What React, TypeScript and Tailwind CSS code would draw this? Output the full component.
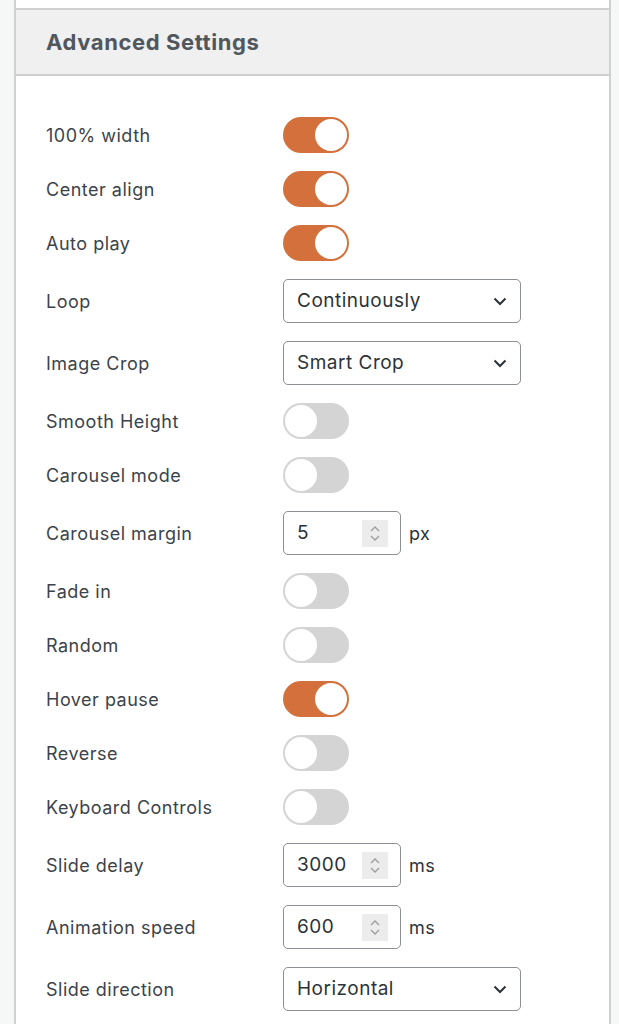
import React from "react";

type Row =
  | { label: string; kind: "toggle"; on: boolean }
  | { label: string; kind: "select"; value: string }
  | { label: string; kind: "number"; value: string; unit: string };

const rows: Row[] = [
  { label: "100% width", kind: "toggle", on: true },
  { label: "Center align", kind: "toggle", on: true },
  { label: "Auto play", kind: "toggle", on: true },
  { label: "Loop", kind: "select", value: "Continuously" },
  { label: "Image Crop", kind: "select", value: "Smart Crop" },
  { label: "Smooth Height", kind: "toggle", on: false },
  { label: "Carousel mode", kind: "toggle", on: false },
  { label: "Carousel margin", kind: "number", value: "5", unit: "px" },
  { label: "Fade in", kind: "toggle", on: false },
  { label: "Random", kind: "toggle", on: false },
  { label: "Hover pause", kind: "toggle", on: true },
  { label: "Reverse", kind: "toggle", on: false },
  { label: "Keyboard Controls", kind: "toggle", on: false },
  { label: "Slide delay", kind: "number", value: "3000", unit: "ms" },
  { label: "Animation speed", kind: "number", value: "600", unit: "ms" },
  { label: "Slide direction", kind: "select", value: "Horizontal" },
];

const Toggle = ({ on }: { on: boolean }) => (
  <div
    className={`flex h-[36px] w-[66px] items-center rounded-full px-[2px] ${
      on ? "justify-end bg-[#d3703b]" : "justify-start bg-[#d4d4d4]"
    }`}
  >
    <div className="h-[32px] w-[32px] rounded-full bg-white" />
  </div>
);

const Chevron = () => (
  <svg width="14" height="9" viewBox="0 0 14 9" fill="none">
    <path d="M1.5 1.5L7 7l5.5-5.5" stroke="#2c3338" strokeWidth="2" />
  </svg>
);

const Select = ({ value }: { value: string }) => (
  <div className="flex h-[44px] w-[238px] items-center justify-between rounded-[5px] border border-[#8c8f94] bg-white pl-[13px] pr-[13px]">
    <span className="text-[19px] tracking-[0.5px] text-[#2c3338]">{value}</span>
    <Chevron />
  </div>
);

const NumberInput = ({ value, unit }: { value: string; unit: string }) => (
  <div className="flex items-center gap-[8px]">
    <div className="flex h-[44px] w-[118px] items-center justify-between rounded-[5px] border border-[#8c8f94] bg-white pl-[13px] pr-[12px]">
      <span className="text-[19px] tracking-[0.5px] text-[#2c3338]">{value}</span>
      <div className="flex h-[27px] w-[26px] flex-col items-center justify-center gap-[3px] bg-[#ececec]">
        <svg width="10" height="6" viewBox="0 0 10 6" fill="none">
          <path d="M1 5l4-4 4 4" stroke="#9a9da1" strokeWidth="1.3" />
        </svg>
        <svg width="10" height="6" viewBox="0 0 10 6" fill="none">
          <path d="M1 1l4 4 4-4" stroke="#9a9da1" strokeWidth="1.3" />
        </svg>
      </div>
    </div>
    <span className="text-[18px] tracking-[0.4px] text-[#2c3338]">{unit}</span>
  </div>
);

export default function App() {
  return (
    <div
      className="flex min-h-[1024px] bg-[#f6f7f7] pl-[14px]"
      style={{ fontFamily: "Inter, 'Noto Sans', sans-serif" }}
    >
      <div className="w-[597px] border-x-2 border-[#d0d0d0] bg-white pt-[8px]">
        <div className="flex h-[68px] items-center border-y-2 border-t-[#d0d0d0] border-b-[#cfcfcf] border-b-dotted bg-[#f0f0f0] pl-[30px]">
          <h2 className="text-[22px] font-bold tracking-[0.6px] text-[#50575e]">Advanced Settings</h2>
        </div>
        <div className="pl-[30px] pt-[32px]">
          {rows.map((r) => (
            <div
              key={r.label}
              className={`flex items-center ${r.kind === "toggle" ? "h-[54px]" : "h-[62px]"}`}
            >
              <div className="w-[237px] text-[18px] tracking-[0.5px] text-[#3c434a]">{r.label}</div>
              {r.kind === "toggle" && <Toggle on={r.on} />}
              {r.kind === "select" && <Select value={r.value} />}
              {r.kind === "number" && <NumberInput value={r.value} unit={r.unit} />}
            </div>
          ))}
        </div>
      </div>
    </div>
  );
}
